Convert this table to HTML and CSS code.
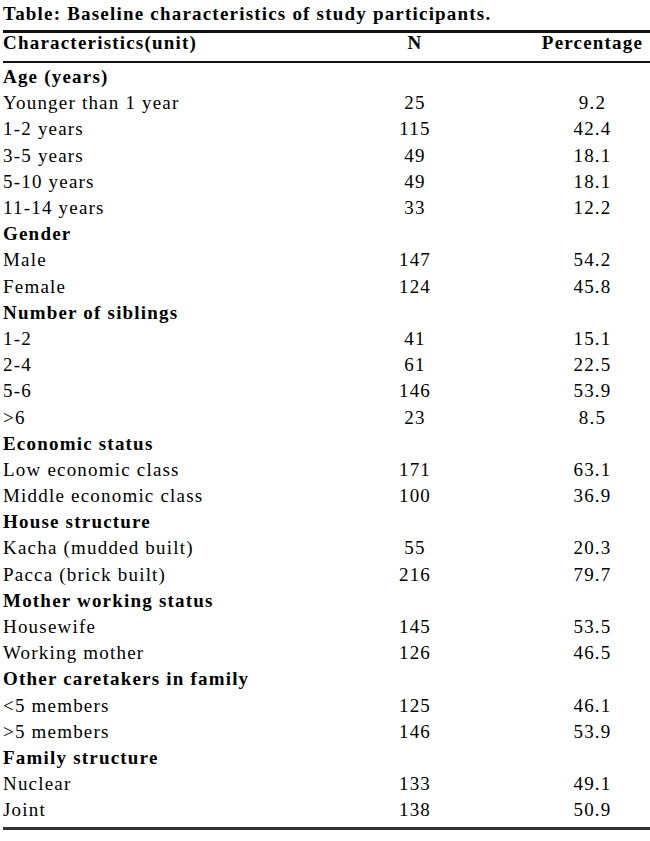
FILE: index.html
```html
<!DOCTYPE html>
<html lang="en">
<head>
<meta charset="utf-8">
<title>Baseline characteristics</title>
<link rel="stylesheet" href="styles.css">
</head>
<body>
<div class="caption">Table: Baseline characteristics of study participants.</div>
<table class="stats">
  <colgroup>
    <col class="c-label">
    <col class="c-n">
    <col class="c-pct">
  </colgroup>
  <thead>
    <tr><th class="label">Characteristics(unit)</th><th class="n">N</th><th class="pct">Percentage</th></tr>
  </thead>
  <tbody>
    <tr class="group"><td class="label">Age (years)</td><td class="n"></td><td class="pct"></td></tr>
    <tr><td class="label">Younger than 1 year</td><td class="n">25</td><td class="pct">9.2</td></tr>
    <tr><td class="label">1-2 years</td><td class="n">115</td><td class="pct">42.4</td></tr>
    <tr><td class="label">3-5 years</td><td class="n">49</td><td class="pct">18.1</td></tr>
    <tr><td class="label">5-10 years</td><td class="n">49</td><td class="pct">18.1</td></tr>
    <tr><td class="label">11-14 years</td><td class="n">33</td><td class="pct">12.2</td></tr>
    <tr class="group"><td class="label">Gender</td><td class="n"></td><td class="pct"></td></tr>
    <tr><td class="label">Male</td><td class="n">147</td><td class="pct">54.2</td></tr>
    <tr><td class="label">Female</td><td class="n">124</td><td class="pct">45.8</td></tr>
    <tr class="group"><td class="label">Number of siblings</td><td class="n"></td><td class="pct"></td></tr>
    <tr><td class="label">1-2</td><td class="n">41</td><td class="pct">15.1</td></tr>
    <tr><td class="label">2-4</td><td class="n">61</td><td class="pct">22.5</td></tr>
    <tr><td class="label">5-6</td><td class="n">146</td><td class="pct">53.9</td></tr>
    <tr><td class="label">&gt;6</td><td class="n">23</td><td class="pct">8.5</td></tr>
    <tr class="group"><td class="label">Economic status</td><td class="n"></td><td class="pct"></td></tr>
    <tr><td class="label">Low economic class</td><td class="n">171</td><td class="pct">63.1</td></tr>
    <tr><td class="label">Middle economic class</td><td class="n">100</td><td class="pct">36.9</td></tr>
    <tr class="group"><td class="label">House structure</td><td class="n"></td><td class="pct"></td></tr>
    <tr><td class="label">Kacha (mudded built)</td><td class="n">55</td><td class="pct">20.3</td></tr>
    <tr><td class="label">Pacca (brick built)</td><td class="n">216</td><td class="pct">79.7</td></tr>
    <tr class="group"><td class="label">Mother working status</td><td class="n"></td><td class="pct"></td></tr>
    <tr><td class="label">Housewife</td><td class="n">145</td><td class="pct">53.5</td></tr>
    <tr><td class="label">Working mother</td><td class="n">126</td><td class="pct">46.5</td></tr>
    <tr class="group"><td class="label">Other caretakers in family</td><td class="n"></td><td class="pct"></td></tr>
    <tr><td class="label">&lt;5 members</td><td class="n">125</td><td class="pct">46.1</td></tr>
    <tr><td class="label">&gt;5 members</td><td class="n">146</td><td class="pct">53.9</td></tr>
    <tr class="group"><td class="label">Family structure</td><td class="n"></td><td class="pct"></td></tr>
    <tr><td class="label">Nuclear</td><td class="n">133</td><td class="pct">49.1</td></tr>
    <tr><td class="label">Joint</td><td class="n">138</td><td class="pct">50.9</td></tr>
  </tbody>
</table>
</body>
</html>
```

FILE: styles.css
```css
html, body {
  margin: 0;
  padding: 0;
  background: #ffffff;
}

body {
  font-family: "Liberation Serif", "Times New Roman", serif;
  font-size: 19px;
  color: #000000;
  letter-spacing: 1.2px;
  width: 650px;
}

.caption {
  font-weight: bold;
  line-height: 27px;
  padding-left: 3px;
  margin-bottom: 3px;
  white-space: nowrap;
}

.stats {
  margin-left: 3px;
  width: 647px;
  border-collapse: separate;
  border-spacing: 0;
  table-layout: fixed;
  border-bottom: 3px solid #333333;
}

.c-label { width: 337px; }
.c-n { width: 150px; }
.c-pct { width: 160px; }

.stats th,
.stats td {
  padding: 0;
  white-space: nowrap;
}

.stats thead th {
  font-weight: bold;
  line-height: 20px;
  padding-bottom: 8px;
  border-top: 3px solid #111111;
  border-bottom: 2px solid #111111;
  vertical-align: top;
}

.stats tbody td {
  height: 26.2px;
  line-height: 20px;
  vertical-align: middle;
}

.stats tbody tr:first-child td {
  padding-top: 1px;
}

.stats tbody tr:last-child td {
  padding-bottom: 4px;
}

.label { text-align: left; }
.n { text-align: center; }
.pct { text-align: center; padding-left: 45px !important; }

.group .label { font-weight: bold; }
```
